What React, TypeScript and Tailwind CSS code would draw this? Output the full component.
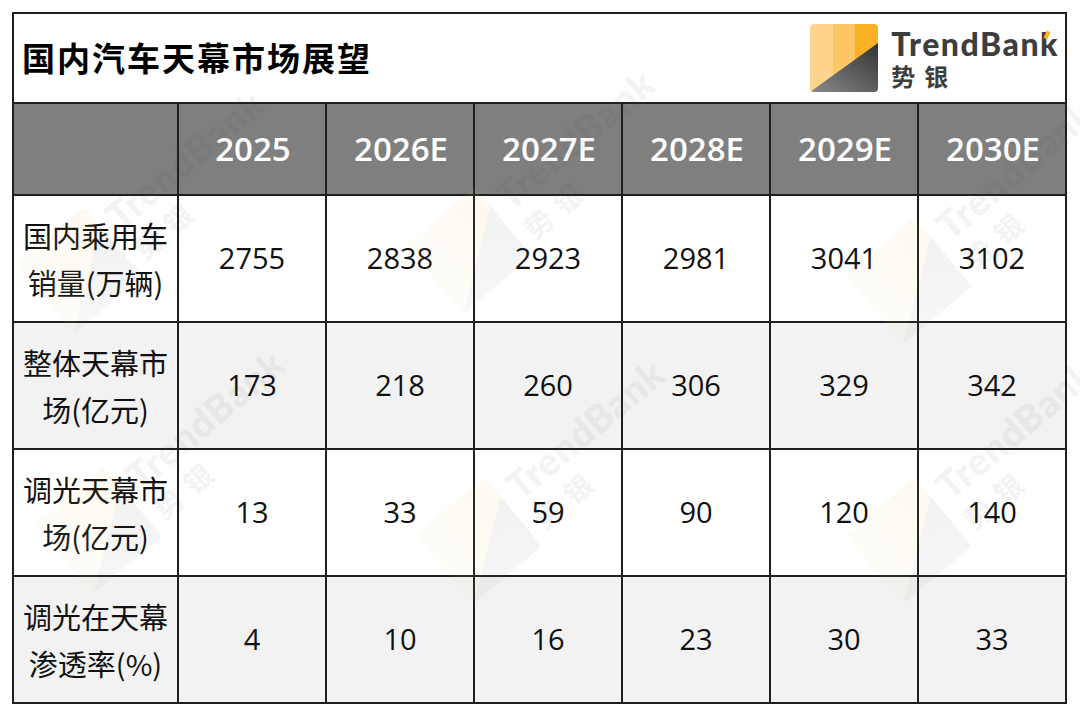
import React from "react";

const years = ["2025", "2026E", "2027E", "2028E", "2029E", "2030E"];

const rows = [
  { label: ["国内乘用车", "销量(万辆)"], values: ["2755", "2838", "2923", "2981", "3041", "3102"], shaded: false },
  { label: ["整体天幕市", "场(亿元)"], values: ["173", "218", "260", "306", "329", "342"], shaded: true },
  { label: ["调光天幕市", "场(亿元)"], values: ["13", "33", "59", "90", "120", "140"], shaded: false },
  { label: ["调光在天幕", "渗透率(%)"], values: ["4", "10", "16", "23", "30", "33"], shaded: true },
];

const font = "font-['Open_Sans','Noto_Sans_CJK_SC',sans-serif]";

const LogoMark = ({ size, id }: { size: number; id: string }) => (
  <svg width={size} height={size} viewBox="0 0 68 68">
    <defs>
      <clipPath id={`r${id}`}>
        <rect x="0" y="0" width="68" height="68" rx="4" />
      </clipPath>
      <linearGradient id={`g${id}`} x1="0" y1="1" x2="1" y2="0">
        <stop offset="0" stopColor="#8a8a8a" />
        <stop offset="1" stopColor="#333333" />
      </linearGradient>
    </defs>
    <g clipPath={`url(#r${id})`}>
      <rect x="0" y="0" width="24" height="68" fill="#fdd48e" />
      <rect x="23" y="0" width="23" height="68" fill="#fcc566" />
      <rect x="45" y="0" width="23" height="68" fill="#fbb124" />
      <polygon points="0,68 68,19 68,68" fill={`url(#g${id})`} />
    </g>
  </svg>
);

const Watermark = ({ className, id }: { className: string; id: string }) => (
  <div className={`pointer-events-none absolute flex items-center gap-3 opacity-[0.06] rotate-[-40deg] ${className}`}>
    <LogoMark size={90} id={id} />
    <div className="flex flex-col leading-none text-[#444]">
      <span className="font-['Lato','Noto_Sans',sans-serif] text-[38px] font-black tracking-[1px]">TrendBank</span>
      <span className="mt-2 font-['Noto_Sans_CJK_SC',sans-serif] text-[28px] font-bold tracking-[10px]">势银</span>
    </div>
  </div>
);

export default function App() {
  return (
    <div className={`relative h-[716px] w-[1080px] overflow-hidden bg-white p-[12px] ${font}`}>
      <div className="grid w-[1055px] grid-cols-[163px_repeat(6,146px)] grid-rows-[88px_90px_repeat(4,125px)] gap-[2px] bg-[#1f1f1f] p-[2px]">
        <div className="col-span-7 flex items-center justify-between bg-white pl-[8px] pr-[6px]">
          <h1 className="font-['Noto_Sans_CJK_SC',sans-serif] text-[33px] font-bold tracking-[2px] text-black">国内汽车天幕市场展望</h1>
          <div className="flex items-center gap-[13px]">
            <LogoMark size={68} id="head" />
            <div className="flex flex-col leading-none text-[#3d3d3d]">
              <span className="relative font-['Lato','Noto_Sans',sans-serif] text-[32px] font-black tracking-[1.5px]">
                TrendBank
                <span className="absolute right-[10px] top-[3px] h-[8px] w-[4px] rotate-[25deg] bg-[#fbb124]" />
              </span>
              <span className="mt-[4px] font-['Noto_Sans_CJK_SC',sans-serif] text-[24px] font-bold tracking-[9px]">势银</span>
            </div>
          </div>
        </div>

        <div className="bg-[#7f7f7f]" />
        {years.map((y) => (
          <div key={y} className="flex items-center justify-center bg-[#7f7f7f] pl-[2px] text-[33px] font-semibold text-white">
            {y}
          </div>
        ))}

        {rows.map((r) => (
          <React.Fragment key={r.label[0]}>
            <div
              className={`flex flex-col items-center justify-center font-['Noto_Sans_CJK_SC',sans-serif] text-[29px] leading-[47px] text-[#111] ${r.shaded ? "bg-[#f2f2f2]" : "bg-white"}`}
            >
              <span>{r.label[0]}</span>
              <span>{r.label[1]}</span>
            </div>
            {r.values.map((v, i) => (
              <div
                key={i}
                className={`flex items-center justify-center pb-[2px] text-[29px] text-[#111] ${r.shaded ? "bg-[#f2f2f2]" : "bg-white"}`}
              >
                {v}
              </div>
            ))}
          </React.Fragment>
        ))}
      </div>

      <Watermark className="left-[10px] top-[160px]" id="w1" />
      <Watermark className="left-[400px] top-[140px]" id="w2" />
      <Watermark className="left-[840px] top-[170px]" id="w3" />
      <Watermark className="left-[30px] top-[420px]" id="w4" />
      <Watermark className="left-[410px] top-[430px]" id="w5" />
      <Watermark className="left-[840px] top-[430px]" id="w6" />
    </div>
  );
}
